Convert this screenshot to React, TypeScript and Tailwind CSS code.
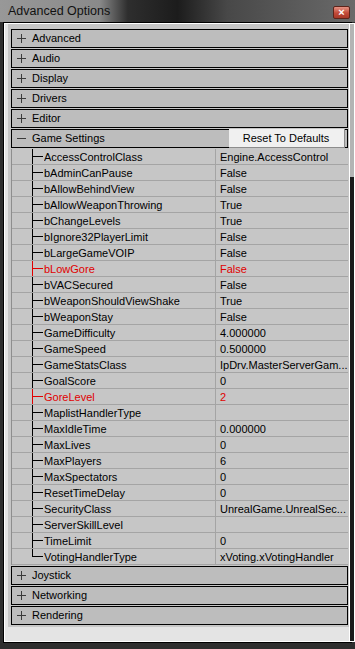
import React from 'react'

type Prop = {
  name: string
  value: string
  red?: boolean
}

const props: Prop[] = [
  { name: 'AccessControlClass', value: 'Engine.AccessControl' },
  { name: 'bAdminCanPause', value: 'False' },
  { name: 'bAllowBehindView', value: 'False' },
  { name: 'bAllowWeaponThrowing', value: 'True' },
  { name: 'bChangeLevels', value: 'True' },
  { name: 'bIgnore32PlayerLimit', value: 'False' },
  { name: 'bLargeGameVOIP', value: 'False' },
  { name: 'bLowGore', value: 'False', red: true },
  { name: 'bVACSecured', value: 'False' },
  { name: 'bWeaponShouldViewShake', value: 'True' },
  { name: 'bWeaponStay', value: 'False' },
  { name: 'GameDifficulty', value: '4.000000' },
  { name: 'GameSpeed', value: '0.500000' },
  { name: 'GameStatsClass', value: 'IpDrv.MasterServerGam...' },
  { name: 'GoalScore', value: '0' },
  { name: 'GoreLevel', value: '2', red: true },
  { name: 'MaplistHandlerType', value: '' },
  { name: 'MaxIdleTime', value: '0.000000' },
  { name: 'MaxLives', value: '0' },
  { name: 'MaxPlayers', value: '6' },
  { name: 'MaxSpectators', value: '0' },
  { name: 'ResetTimeDelay', value: '0' },
  { name: 'SecurityClass', value: 'UnrealGame.UnrealSec...' },
  { name: 'ServerSkillLevel', value: '' },
  { name: 'TimeLimit', value: '0' },
  { name: 'VotingHandlerType', value: 'xVoting.xVotingHandler' },
]

const Toggle = ({ open }: { open: boolean }) => (
  <svg width="9" height="9" viewBox="0 0 9 9" className="ml-[5px] shrink-0">
    <line x1="0" y1="4.5" x2="9" y2="4.5" stroke="#3a3a3a" strokeWidth="1" />
    {!open && <line x1="4.5" y1="0" x2="4.5" y2="9" stroke="#3a3a3a" strokeWidth="1" />}
  </svg>
)

const Header = ({ label, open = false, children }: { label: string; open?: boolean; children?: React.ReactNode }) => (
  <div className="h-[19px] mb-[1px] flex items-center border border-black bg-[#bdbdbd] text-[11px] text-black">
    <Toggle open={open} />
    <span className="ml-[6px]">{label}</span>
    {children}
  </div>
)

const PropRow = ({ p, last }: { p: Prop; last: boolean }) => {
  const line = p.red ? 'border-[#e00000]' : 'border-black'
  const text = p.red ? 'text-[#e00000]' : 'text-black'
  return (
    <div className="h-[16px] flex border-b border-[#a4a4a4] text-[11px]">
      <div className="w-[20px] shrink-0" />
      <div className="w-[12px] shrink-0 flex flex-col">
        <div className={`h-[8px] border-l border-b ${line} w-[11px]`} />
        {!last && <div className={`flex-1 border-l ${line}`} />}
      </div>
      <div className={`w-[171px] shrink-0 leading-[17px] whitespace-nowrap overflow-hidden ${text}`}>{p.name}</div>
      <div className={`flex-1 border-l border-[#a4a4a4] pl-[4px] leading-[17px] whitespace-nowrap overflow-hidden ${text}`}>
        {p.value}
      </div>
    </div>
  )
}

export default function App() {
  return (
    <div
      className="w-[355px] h-[649px] flex flex-col bg-[#2e2e2e] overflow-hidden"
      style={{ fontFamily: '"Liberation Sans", Arial, sans-serif' }}
    >
      <div className="h-[22px] shrink-0 flex items-center bg-[linear-gradient(to_right,#989898_0%,#8a8a8a_28%,#2e2e2e_36%,#1c1c1c_50%,#484848_64%,#6a6a6a_100%)]">
        <span className="ml-[8px] mt-[1px] text-[12.5px] text-[#111]">Advanced Options</span>
        <div className="ml-auto mr-[5px] mt-[3px] w-[17px] h-[13px] rounded-[2px] border border-[#5e241a] bg-[linear-gradient(to_bottom,#e69384,#c24a38_55%,#a83828)] flex items-center justify-center text-white text-[11px] font-bold leading-none">
          ×
        </div>
      </div>

      <div className="flex-1 ml-[3px] mr-[3px] mb-[6px] border border-black flex">
        <div className="flex-1 border border-white flex">
          <div className="flex-1 flex flex-col bg-[#e4e4e4] pl-[3px]">
            <div className="bg-[#c6c6c6] pt-[5px] pl-[3px] pr-[1px] pb-[1px]">
              <Header label="Advanced" />
              <Header label="Audio" />
              <Header label="Display" />
              <Header label="Drivers" />
              <Header label="Editor" />
              <Header label="Game Settings" open>
                <div className="ml-auto mr-[2px] -my-[1px] h-[19px] w-[116px] bg-[#f0f0f0] border-r border-b border-[#8c8c8c] flex items-center justify-center text-[11px] text-black">
                  Reset To Defaults
                </div>
              </Header>
              <div className="mt-[1px] mb-[1px] border-l border-[#8e8e8e]">
                {props.map((p, i) => (
                  <PropRow key={p.name} p={p} last={i === props.length - 1} />
                ))}
              </div>
              <Header label="Joystick" />
              <Header label="Networking" />
              <Header label="Rendering" />
            </div>
          </div>
          <div className="w-[5px] border-l border-white flex flex-col">
            <div className="h-[153px] bg-[#b4b4b4]" />
            <div className="flex-1 bg-[#1b1b1b]" />
          </div>
        </div>
      </div>
    </div>
  )
}
